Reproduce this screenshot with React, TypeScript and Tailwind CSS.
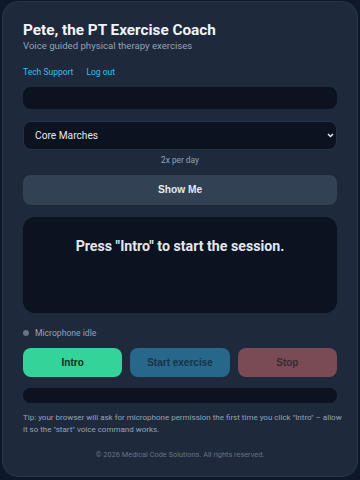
export default function App() {
  return (
    <div className="h-[480px] bg-[#0f172a] pt-px px-[2px] pb-[3px] font-['Roboto',sans-serif]">
      <div className="h-full rounded-2xl border border-[#2b3648] bg-[#1e293b] px-5 pt-[18px]">
        <h1 className="text-[15.3px] font-bold leading-[20px] text-[#f1f5f9]">
          Pete, the PT Exercise Coach
        </h1>
        <p className="text-[9.6px] leading-[12px] text-[#94a3b8]">
          Voice guided physical therapy exercises
        </p>

        <div className="mt-[14px] flex gap-[13px] text-[8.5px] leading-[12px] text-[#38bdf8]">
          <a href="#">Tech Support</a>
          <a href="#">Log out</a>
        </div>

        <div className="mt-[9px] h-[22px] rounded-lg bg-[#0b1220]" />

        <div className="relative mt-[12px]">
          <select className="h-[29px] w-full appearance-none rounded-lg border border-[#273244] bg-[#0b1220] pl-[11px] text-[10.2px] text-[#e2e8f0]">
            <option>Core Marches</option>
          </select>
          <svg
            className="pointer-events-none absolute right-[3px] top-[12px]"
            width="7"
            height="5"
            viewBox="0 0 7 5"
          >
            <path d="M1 1l2.5 2.5L6 1" stroke="#e2e8f0" strokeWidth="1.5" fill="none" />
          </svg>
        </div>
        <p className="mt-[4px] text-center text-[8.3px] leading-[12px] text-[#94a3b8]">
          2x per day
        </p>

        <button className="mt-[9px] h-[30px] w-full rounded-lg bg-[#334155] font-['Liberation_Sans',sans-serif] text-[10.2px] font-bold text-[#e2e8f0]">
          Show Me
        </button>

        <div className="mt-[12px] h-[96px] rounded-xl bg-[#0b1220] pt-[20px] text-center text-[14.2px] font-bold leading-[18px] text-[#e2e8f0]">
          Press "Intro" to start the session.
        </div>

        <div className="mt-[14px] flex items-center gap-[6px] text-[8.6px] leading-[12px] text-[#94a3b8]">
          <span className="h-[6px] w-[6px] rounded-full bg-[#64748b]" />
          Microphone idle
        </div>

        <div className="mt-[9px] grid grid-cols-3 gap-2 font-['Liberation_Sans',sans-serif] text-[10px] font-bold">
          <button className="h-[29px] rounded-lg bg-[#34d399] text-[#0f2a22]">Intro</button>
          <button className="h-[29px] rounded-lg bg-[#27688a] text-[#17324a]">Start exercise</button>
          <button className="h-[29px] rounded-lg bg-[#7a4a55] text-[#3a2a30]">Stop</button>
        </div>

        <div className="mt-[11px] h-[15px] rounded-full bg-[#0b1220]" />

        <p className="mt-[9px] whitespace-nowrap text-[8px] leading-[11.6px] text-[#94a3b8]">
          Tip: your browser will ask for microphone permission the first time you click "Intro" – allow
          <br />
          it so the "start" voice command works.
        </p>

        <p className="mt-[15px] text-center text-[7.4px] leading-[10px] text-[#64748b]">
          © 2026 Medical Code Solutions. All rights reserved.
        </p>
      </div>
    </div>
  );
}
